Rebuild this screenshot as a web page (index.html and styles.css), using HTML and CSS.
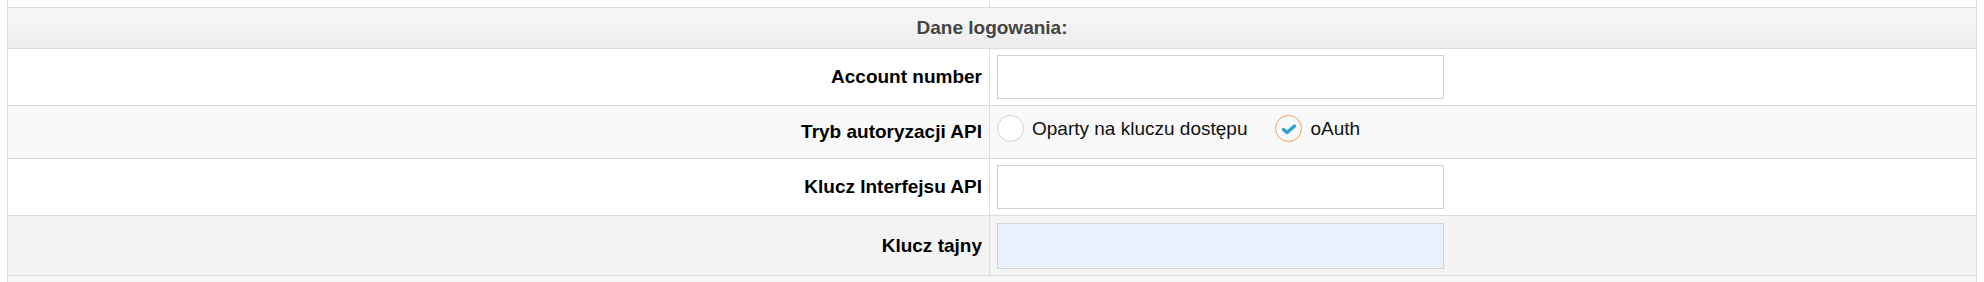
FILE: index.html
```html
<!DOCTYPE html>
<html lang="pl">
<head>
    <meta charset="UTF-8">
    <meta name="viewport" content="width=device-width, initial-scale=1.0">
    <title>Dane logowania</title>

    <link rel="stylesheet" href="styles.css">
</head>
<body>
    <table class="settings">
        <tbody>
            <tr class="top-row">
                <td class="label-cell"></td>
                <td></td>
            </tr>
            <tr>
                <th class="section" colspan="2">Dane logowania:</th>
            </tr>
            <tr>
                <td class="label-cell">Account number</td>
                <td class="field-cell"><input type="text" class="text-input"></td>
            </tr>
            <tr class="row-alt">
                <td class="label-cell">Tryb autoryzacji API</td>
                <td class="field-cell radio-cell">
                    <div class="radio-group">
                        <label class="radio-option">
                            <span class="radio"></span>
                            <span>Oparty na kluczu dostępu</span>
                        </label>
                        <label class="radio-option">
                            <span class="radio checked">
                                <svg width="16" height="11" viewBox="0 0 16 11">
                                    <path d="M2.5 5.5 L6 8.5 L13.5 2" fill="none" stroke="#2f9fd6" stroke-width="3.4" stroke-linecap="round" stroke-linejoin="round"/>
                                </svg>
                            </span>
                            <span>oAuth</span>
                        </label>
                    </div>
                </td>
            </tr>
            <tr>
                <td class="label-cell">Klucz Interfejsu API</td>
                <td class="field-cell"><input type="text" class="text-input"></td>
            </tr>
            <tr class="row-grey">
                <td class="label-cell">Klucz tajny</td>
                <td class="field-cell tall"><input type="password" class="text-input filled"></td>
            </tr>
            <tr>
                <th class="section" colspan="2"></th>
            </tr>
        </tbody>
    </table>
</body>
</html>
```

FILE: styles.css
```css
/* page */
body {
    margin: 0 7px;
    font-family: "Liberation Sans", Arial, Helvetica, sans-serif;
    font-size: 19px;
    color: #111;
    background: #fff;
}

/* table */
.settings {
    border-collapse: collapse;
    width: 100%;
}

th, td {
    border: 1px solid #dcdcdc;
    padding: 6px 7px;
}

.top-row td {
    border-top: none;
    height: 7px;
    padding: 0;
    line-height: 0;
}

.section {
    background: linear-gradient(#f8f8f8, #ececec);
    color: #444;
    font-weight: bold;
    text-align: center;
    line-height: 20px;
    height: 20px;
    padding: 10px 7px;
}

.label-cell {
    width: 967px;
    text-align: right;
    font-weight: bold;
    color: #000;
    vertical-align: middle;
}

.row-alt {
    background: #f9f9f9;
}

.row-grey {
    background: #f4f4f4;
}

/* inputs */
.text-input {
    display: block;
    box-sizing: border-box;
    width: 447px;
    height: 44px;
    margin: 0;
    border: 1px solid #d2d2d2;
    background: #fff;
    font: inherit;
}

.field-cell.tall {
    padding-top: 7px;
}

.tall .text-input {
    height: 46px;
}

.filled {
    background: #e8f1fc;
}

/* radios */
.field-cell.radio-cell {
    padding-top: 9px;
    padding-bottom: 16px;
}

.radio-group {
    display: flex;
    align-items: center;
    gap: 28px;
    height: 27px;
}

.radio-option {
    display: flex;
    align-items: center;
    gap: 8px;
    color: #111;
}

.radio {
    display: flex;
    align-items: center;
    justify-content: center;
    box-sizing: border-box;
    width: 27px;
    height: 27px;
    border: 1px solid #cfcfcf;
    border-radius: 50%;
    background: #fff;
}

.radio.checked {
    border-color: #f29b4c;
    background: #f7f9fb;
}

.radio svg {
    margin-top: 2px;
}
```
